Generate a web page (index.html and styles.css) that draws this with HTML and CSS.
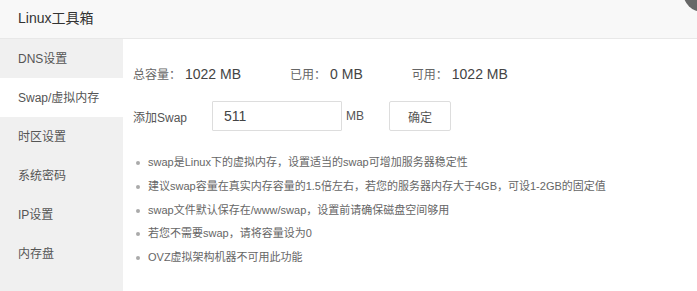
FILE: index.html
```html
<!DOCTYPE html>
<html lang="zh-CN">
<head>
<meta charset="utf-8">
<title>Linux工具箱</title>
<link rel="stylesheet" href="styles.css">
</head>
<body>
<div class="layer">
  <div class="layer-title">Linux工具箱</div>
  <span class="layer-close"></span>
  <div class="layer-body">
    <ul class="side-nav">
      <li class="nav-item">DNS设置</li>
      <li class="nav-item active">Swap/虚拟内存</li>
      <li class="nav-item">时区设置</li>
      <li class="nav-item">系统密码</li>
      <li class="nav-item">IP设置</li>
      <li class="nav-item">内存盘</li>
    </ul>
    <div class="content">
      <div class="stats">
        <span class="stat"><span class="stat-label">总容量：</span><span class="stat-value">1022 MB</span></span>
        <span class="stat"><span class="stat-label">已用：</span><span class="stat-value">0 MB</span></span>
        <span class="stat"><span class="stat-label">可用：</span><span class="stat-value">1022 MB</span></span>
      </div>
      <div class="form-row">
        <span class="form-label">添加Swap</span>
        <input class="form-input" type="text" value="511">
        <span class="form-unit">MB</span>
        <button class="btn">确定</button>
      </div>
      <ul class="tips">
        <li>swap是Linux下的虚拟内存，设置适当的swap可增加服务器稳定性</li>
        <li>建议swap容量在真实内存容量的1.5倍左右，若您的服务器内存大于4GB，可设1-2GB的固定值</li>
        <li>swap文件默认保存在/www/swap，设置前请确保磁盘空间够用</li>
        <li>若您不需要swap，请将容量设为0</li>
        <li>OVZ虚拟架构机器不可用此功能</li>
      </ul>
    </div>
  </div>
</div>
</body>
</html>
```
FILE: styles.css
```css
* { box-sizing: border-box; }
html, body { margin: 0; padding: 0; background: #fff; }
body {
  font-family: "Liberation Sans", "Noto Sans CJK SC", sans-serif;
  color: #333;
}
.layer {
  position: relative;
  width: 697px;
  height: 291px;
  overflow: hidden;
  background: #fff;
}
.layer-title {
  height: 39px;
  line-height: 37px;
  padding-left: 18px;
  font-size: 14px;
  color: #333;
  background: #f8f8f8;
  border-bottom: 1px solid #e8e8e8;
}
.layer-close {
  position: absolute;
  left: 683px;
  top: -28px;
  width: 40px;
  height: 40px;
  border-radius: 50%;
  background: #686868;
}
.layer-body {
  display: flex;
  height: 252px;
}
.side-nav {
  list-style: none;
  margin: 0;
  padding: 0;
  width: 123px;
  flex: none;
  background: #f0f0f0;
}
.nav-item {
  height: 39px;
  line-height: 37px;
  padding: 2px 0 0 18px;
  font-size: 12px;
  color: #555;
}
.nav-item.active { background: #fff; }
.content {
  flex: 1;
  padding: 25px 0 0 10px;
}
.stats {
  display: flex;
  align-items: baseline;
  height: 20px;
  line-height: 20px;
}
.stat { margin-right: 49px; white-space: nowrap; }
.stat-label { font-size: 12px; color: #666; margin-right: 4px; }
.stat-value { font-size: 14px; color: #444; }
.form-row {
  display: flex;
  align-items: center;
  margin-top: 17px;
  height: 30px;
}
.form-label {
  width: 79px;
  font-size: 12px;
  color: #555;
}
.form-input {
  width: 130px;
  height: 30px;
  border: 1px solid #ddd;
  padding: 0 0 0 11px;
  font-family: inherit;
  font-size: 14px;
  color: #444;
  outline: none;
  border-radius: 1px;
}
.form-unit {
  margin-left: 4px;
  font-size: 12px;
  color: #555;
}
.btn {
  margin-left: 25px;
  width: 62px;
  height: 30px;
  border: 1px solid #ddd;
  border-radius: 2px;
  background: #fff;
  font-family: inherit;
  font-size: 12px;
  color: #555;
  padding: 0;
}
.tips {
  list-style: none;
  margin: 20px 0 0 0;
  padding: 0;
}
.tips li {
  position: relative;
  padding-left: 15px;
  height: 23.75px;
  line-height: 23.75px;
  font-size: 11px;
  color: #666;
  white-space: nowrap;
}
.tips li::before {
  content: "";
  position: absolute;
  left: 3px;
  top: 10px;
  width: 4px;
  height: 4px;
  border-radius: 50%;
  background: #aaa;
}
```
